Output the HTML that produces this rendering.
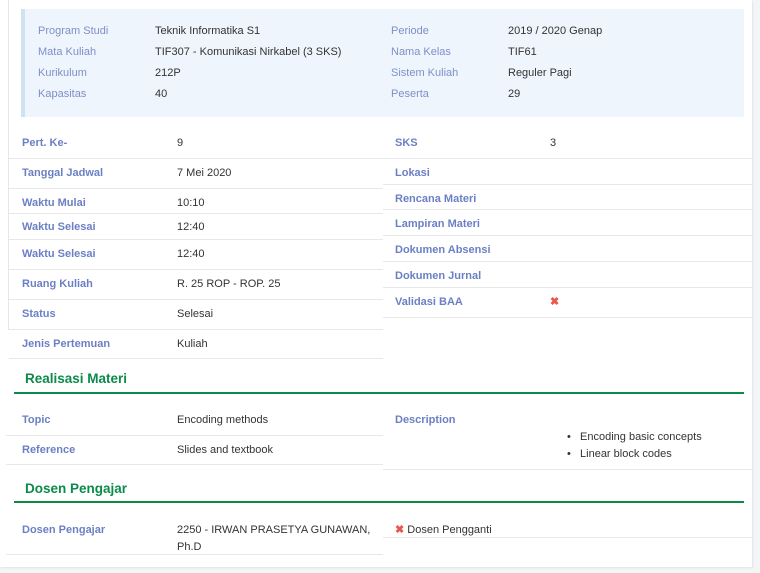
<!DOCTYPE html>
<html><head><meta charset="utf-8"><style>
*{margin:0;padding:0;box-sizing:border-box}
body{width:760px;height:573px;background:#f4f5f6;font-family:"Liberation Sans",sans-serif;font-size:11px;color:#333;position:relative;overflow:hidden}
.card{position:absolute;left:0;top:0;width:752px;height:567px;background:#fff;box-shadow:1px 1px 2px rgba(0,0,0,.08)}
.vl{position:absolute;left:8px;top:0;width:1px;height:330px;background:#e6e6e6}
.info{position:absolute;left:21px;top:9px;width:723px;height:108px;background:#eef5fc;border-left:4px solid #cfe2f1}
.t{position:absolute;white-space:nowrap;line-height:14px;margin-top:1px}
.il{color:#7f8fc9}
.lb{color:#6b7fc4;font-weight:bold}
.ln{position:absolute;height:1px;background:#e8e8e8}
.h{position:absolute;color:#0b8a4a;font-weight:bold;font-size:13.5px;margin-top:1px}
.g{position:absolute;left:14px;width:730px;height:2px;background:#0b8a4a}
.x{color:#e8574a;font-weight:bold}
</style></head><body>
<div class="card"></div>
<div class="vl"></div>
<div class="info"></div>
<div class="t il" style="left:38px;top:23px">Program Studi</div><div class="t" style="left:155px;top:23px">Teknik Informatika S1</div>
<div class="t il" style="left:38px;top:44px">Mata Kuliah</div><div class="t" style="left:155px;top:44px">TIF307 - Komunikasi Nirkabel (3 SKS)</div>
<div class="t il" style="left:38px;top:65px">Kurikulum</div><div class="t" style="left:155px;top:65px">212P</div>
<div class="t il" style="left:38px;top:86px">Kapasitas</div><div class="t" style="left:155px;top:86px">40</div>
<div class="t il" style="left:391px;top:23px">Periode</div><div class="t" style="left:508px;top:23px">2019 / 2020 Genap</div>
<div class="t il" style="left:391px;top:44px">Nama Kelas</div><div class="t" style="left:508px;top:44px">TIF61</div>
<div class="t il" style="left:391px;top:65px">Sistem Kuliah</div><div class="t" style="left:508px;top:65px">Reguler Pagi</div>
<div class="t il" style="left:391px;top:86px">Peserta</div><div class="t" style="left:508px;top:86px">29</div>

<div class="t lb" style="left:22px;top:135px">Pert. Ke-</div><div class="t" style="left:177px;top:135px">9</div>
<div class="ln" style="left:9px;width:374px;top:158px"></div>
<div class="t lb" style="left:22px;top:165px">Tanggal Jadwal</div><div class="t" style="left:177px;top:165px">7 Mei 2020</div>
<div class="ln" style="left:9px;width:374px;top:188px"></div>
<div class="t lb" style="left:22px;top:195px">Waktu Mulai</div><div class="t" style="left:177px;top:195px">10:10</div>
<div class="ln" style="left:9px;width:374px;top:213px"></div>
<div class="t lb" style="left:22px;top:219px">Waktu Selesai</div><div class="t" style="left:177px;top:219px">12:40</div>
<div class="ln" style="left:9px;width:374px;top:239px"></div>
<div class="t lb" style="left:22px;top:246px">Waktu Selesai</div><div class="t" style="left:177px;top:246px">12:40</div>
<div class="ln" style="left:9px;width:374px;top:269px"></div>
<div class="t lb" style="left:22px;top:276px">Ruang Kuliah</div><div class="t" style="left:177px;top:276px">R. 25 ROP - ROP. 25</div>
<div class="ln" style="left:9px;width:374px;top:299px"></div>
<div class="t lb" style="left:22px;top:306px">Status</div><div class="t" style="left:177px;top:306px">Selesai</div>
<div class="ln" style="left:9px;width:374px;top:329px"></div>
<div class="t lb" style="left:22px;top:336px">Jenis Pertemuan</div><div class="t" style="left:177px;top:336px">Kuliah</div>
<div class="ln" style="left:9px;width:374px;top:358px"></div>

<div class="t lb" style="left:395px;top:135px">SKS</div><div class="t" style="left:550px;top:135px">3</div>
<div class="ln" style="left:383px;width:369px;top:158px"></div>
<div class="t lb" style="left:395px;top:165px">Lokasi</div>
<div class="ln" style="left:383px;width:369px;top:184px"></div>
<div class="t lb" style="left:395px;top:191px">Rencana Materi</div>
<div class="ln" style="left:383px;width:369px;top:209px"></div>
<div class="t lb" style="left:395px;top:216px">Lampiran Materi</div>
<div class="ln" style="left:383px;width:369px;top:235px"></div>
<div class="t lb" style="left:395px;top:242px">Dokumen Absensi</div>
<div class="ln" style="left:383px;width:369px;top:261px"></div>
<div class="t lb" style="left:395px;top:268px">Dokumen Jurnal</div>
<div class="ln" style="left:383px;width:369px;top:287px"></div>
<div class="t lb" style="left:395px;top:294px">Validasi BAA</div><div class="t x" style="left:550px;top:294px">✖</div>
<div class="ln" style="left:383px;width:369px;top:317px"></div>

<div class="h" style="left:25px;top:370px">Realisasi Materi</div>
<div class="g" style="top:392px"></div>
<div class="t lb" style="left:22px;top:412px">Topic</div><div class="t" style="left:177px;top:412px">Encoding methods</div>
<div class="ln" style="left:6px;width:377px;top:435px"></div>
<div class="t lb" style="left:22px;top:442px">Reference</div><div class="t" style="left:177px;top:442px">Slides and textbook</div>
<div class="ln" style="left:6px;width:377px;top:464px"></div>
<div class="t lb" style="left:395px;top:412px">Description</div>
<div class="t" style="left:567px;top:429px">•&nbsp;&nbsp;&nbsp;Encoding basic concepts</div>
<div class="t" style="left:567px;top:446px">•&nbsp;&nbsp;&nbsp;Linear block codes</div>
<div class="ln" style="left:383px;width:369px;top:469px"></div>

<div class="h" style="left:25px;top:480px">Dosen Pengajar</div>
<div class="g" style="top:501px"></div>
<div class="t lb" style="left:22px;top:522px">Dosen Pengajar</div>
<div class="t" style="left:177px;top:522px">2250 - IRWAN PRASETYA GUNAWAN,</div>
<div class="t" style="left:177px;top:539px">Ph.D</div>
<div class="ln" style="left:6px;width:377px;top:554px"></div>
<div class="t" style="left:395px;top:522px"><span class="x">✖</span> Dosen Pengganti</div>
<div class="ln" style="left:383px;width:369px;top:537px"></div>
</body></html>
